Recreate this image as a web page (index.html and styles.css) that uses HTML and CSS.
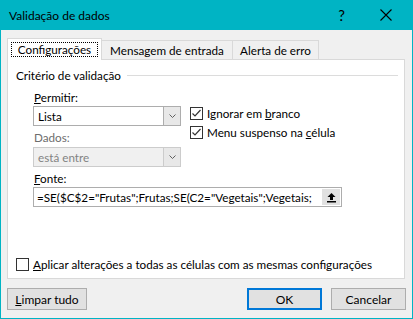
FILE: index.html
```html
<!DOCTYPE html>
<html lang="pt-BR">

<head>
  <meta charset="UTF-8">
  <title>Validação de dados</title>
  <link rel="stylesheet" href="styles.css">
</head>

<body>
  <div class="window">
    <!-- Title bar -->
    <div class="titlebar">
      <span class="title">Validação de dados</span>
      <span class="help">?</span>
      <svg class="close" width="12" height="12" viewBox="0 0 12 12">
        <path d="M0.5 0.5 L11.5 11.5 M11.5 0.5 L0.5 11.5" stroke="#000" stroke-width="1.1" fill="none"/>
      </svg>
    </div>

    <!-- Tabs -->
    <div class="tabs">
      <div class="tab active"><span class="focus">Configurações</span></div>
      <div class="tab tab-msg">Mensagem de entrada</div>
      <div class="tab tab-err">Alerta de erro</div>
    </div>

    <div class="panel">
      <div class="group-title"><span>Critério de validação</span></div>

      <div class="criteria">
        <div class="left-col">
          <label class="label"><u>P</u>ermitir:</label>
          <div class="combo">
            <span class="combo-text">Lista</span>
            <span class="combo-btn">
              <svg width="7" height="4" viewBox="0 0 7 4"><path d="M0.5 0.5 L3.5 3.5 L6.5 0.5" stroke="#606060" fill="none"/></svg>
            </span>
          </div>
          <label class="label disabled">Dados:</label>
          <div class="combo disabled">
            <span class="combo-text">está entre</span>
            <span class="combo-btn">
              <svg width="7" height="4" viewBox="0 0 7 4"><path d="M0.5 0.5 L3.5 3.5 L6.5 0.5" stroke="#606060" fill="none"/></svg>
            </span>
          </div>
        </div>

        <div class="right-col">
          <div class="check-row">
            <span class="checkbox checked">
              <svg width="11" height="11" viewBox="0 0 11 11"><path d="M1.5 5.5 L4 8 L9.5 2" stroke="#333" stroke-width="1.2" fill="none"/></svg>
            </span>
            <span>Ignorar em <u>b</u>ranco</span>
          </div>
          <div class="check-row">
            <span class="checkbox checked">
              <svg width="11" height="11" viewBox="0 0 11 11"><path d="M1.5 5.5 L4 8 L9.5 2" stroke="#333" stroke-width="1.2" fill="none"/></svg>
            </span>
            <span>Menu suspenso na <u>c</u>élula</span>
          </div>
        </div>
      </div>

      <div class="source">
        <label class="label"><u>F</u>onte:</label>
        <div class="source-input">
          <span class="source-text">=SE($C$2="Frutas";Frutas;SE(C2="Vegetais";Vegetais;</span>
          <span class="collapse-btn">
            <svg width="11" height="11" viewBox="0 0 11 11">
              <path d="M5.5 1 L1.5 5 H4 V8 H7 V5 H9.5 Z" fill="#000"/>
              <rect x="1" y="9" width="9" height="1.5" fill="#000"/>
            </svg>
          </span>
        </div>
      </div>

      <div class="check-row apply">
        <span class="checkbox"></span>
        <span><u>A</u>plicar alterações a todas as células com as mesmas configurações</span>
      </div>
    </div>

    <!-- Footer buttons -->
    <div class="footer">
      <button class="btn wide"><u>L</u>impar tudo</button>
      <span class="spacer"></span>
      <button class="btn default">OK</button>
      <button class="btn">Cancelar</button>
    </div>
  </div>
</body>

</html>
```

FILE: styles.css
```css
/* Dialog base */
body {
  margin: 0;
  font-family: Lato, "Liberation Sans", Arial, sans-serif;
  font-size: 11.7px;
  color: #000;
}

.window {
  width: 413px;
  height: 319px;
  box-sizing: border-box;
  border: 1px solid #00b4c4;
  border-top: none;
  background-color: #f0f0f0;
  display: flex;
  flex-direction: column;
}

.titlebar {
  height: 30px;
  margin: 0 -1px;
  background-color: #00b4c4;
  display: flex;
  align-items: center;
  padding-left: 9px;
  font-size: 12px;
}

.title {
  flex: 1;
}

.help {
  font-size: 15px;
  margin-right: 35px;
  margin-top: -1px;
}

.close {
  margin-right: 21px;
}

/* Tabs */
.tabs {
  display: flex;
  align-items: flex-end;
  margin: 8px 0 0 6px;
  height: 21px;
  position: relative;
  z-index: 2;
}

.tab {
  height: 19px;
  box-sizing: border-box;
  border: 1px solid #d9d9d9;
  border-bottom: none;
  border-left: none;
  line-height: 18px;
  text-align: center;
  background-color: #f0f0f0;
  white-space: nowrap;
}

.tab-msg {
  width: 131px;
}

.tab-err {
  width: 86px;
}

.tab.active {
  width: 95px;
  height: 22px;
  margin-bottom: -1px;
  border-left: 1px solid #d9d9d9;
  background-color: #fff;
  padding-top: 3px;
  line-height: 15px;
}

.focus {
  display: inline-block;
  width: 87px;
  height: 15px;
  box-sizing: border-box;
  border: 1px dotted #000;
  line-height: 13px;
}

/* Panel */
.panel {
  margin: 0 7px 0 6px;
  height: 220px;
  box-sizing: border-box;
  border: 1px solid #d9d9d9;
  background-color: #fff;
  padding: 8px 6px 6px 8px;
  display: flex;
  flex-direction: column;
}

.group-title {
  display: flex;
  align-items: center;
  line-height: 15px;
}

.group-title::after {
  content: "";
  flex: 1;
  border-top: 1px solid #dcdcdc;
  margin-left: 6px;
}

.criteria {
  display: flex;
  padding-left: 17px;
  margin-top: 7px;
}

.left-col {
  width: 148px;
}

.label {
  display: block;
  line-height: 15px;
  padding-left: 1px;
  margin-bottom: 1px;
}

.label.disabled {
  margin-top: 4px;
  margin-bottom: 2px;
  color: #6d6d6d;
}

.combo {
  height: 20px;
  box-sizing: border-box;
  border: 1px solid #adadad;
  background-color: #fff;
  display: flex;
}

.combo-text {
  flex: 1;
  padding-left: 4px;
  line-height: 18px;
}

.combo-btn {
  width: 16px;
  border-left: 1px solid #adadad;
  background-color: #e8e8e8;
  display: flex;
  align-items: center;
  justify-content: center;
}

.combo.disabled {
  background-color: #f0f0f0;
  border-color: #cccccc;
  color: #838383;
}

.combo.disabled .combo-btn {
  border-left-color: #cccccc;
  background-color: #e8e8e8;
}

.right-col {
  margin-left: 9px;
  padding-top: 16px;
  display: flex;
  flex-direction: column;
  gap: 4px;
}

.check-row {
  display: flex;
  align-items: center;
  line-height: 15px;
}

.checkbox {
  width: 13px;
  height: 13px;
  box-sizing: border-box;
  border: 1px solid #333;
  background-color: #fff;
  margin-right: 4px;
  display: flex;
  align-items: center;
  justify-content: center;
}

.source {
  padding-left: 17px;
  margin-top: 4px;
}

.source-input {
  width: 309px;
  height: 20px;
  box-sizing: border-box;
  border: 1px solid #adadad;
  display: flex;
  align-items: center;
}

.source-text {
  flex: 1;
  white-space: nowrap;
  padding-left: 3px;
  line-height: 18px;
}

.collapse-btn {
  width: 20px;
  height: 18px;
  box-sizing: border-box;
  border: 1px solid #fff;
  background-color: #e1e1e1;
  display: flex;
  align-items: center;
  justify-content: center;
}

.apply {
  margin-top: auto;
}

/* Footer */
.footer {
  display: flex;
  margin: 9px 6px 0 6px;
}

.spacer {
  flex: 1;
}

.btn {
  font-family: inherit;
  font-size: 12px;
  color: #000;
  width: 75px;
  height: 22px;
  box-sizing: border-box;
  border: 1px solid #adadad;
  background-color: #e1e1e1;
  padding: 0;
  margin-left: 9px;
}

.btn.wide {
  width: 80px;
  margin-left: 0;
}

.btn.default {
  border: 2px solid #0078d7;
}
```
